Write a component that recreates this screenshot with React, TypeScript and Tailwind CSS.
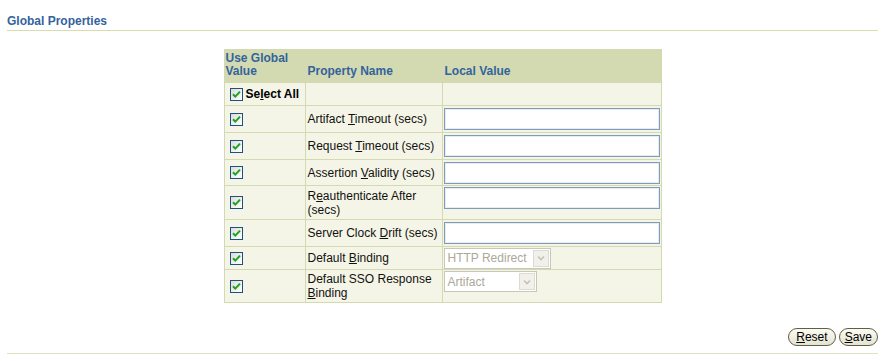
import React from "react";

const Check = () => (
  <div className="w-[13px] h-[13px] border border-[#1c5180] bg-gradient-to-br from-[#dcdcd6] to-white flex items-center justify-center shrink-0">
    <svg width="9" height="9" viewBox="0 0 9 9">
      <path d="M1 4.2 L3.3 6.6 L8 1.6" stroke="#21a121" strokeWidth="2" fill="none" />
    </svg>
  </div>
);

const U = ({ children }: { children: React.ReactNode }) => <span className="underline underline-offset-[1px]">{children}</span>;

const TextInput = () => (
  <div className="w-[216px] h-[22px] border border-[#7f9db9] bg-white shadow-[inset_0_0_0_1px_#e8ecf0]" />
);

const Select = ({ label, w }: { label: string; w: string }) => (
  <div className={`${w} h-[21px] border border-[#c9c7ba] bg-white flex items-center justify-between pl-[3px] pr-[1px]`}>
    <span className="text-[#aca899] text-[12px] leading-[14px]">{label}</span>
    <div className="w-[16px] h-[17px] border border-[#dcdbd0] bg-[#f1f0ea] flex items-center justify-center">
      <svg width="8" height="6" viewBox="0 0 8 6">
        <path d="M1 1.5 L4 4.5 L7 1.5" stroke="#c4c3b6" strokeWidth="1.6" fill="none" />
      </svg>
    </div>
  </div>
);

const rows: { h: string; label: React.ReactNode; ctrl: React.ReactNode; top?: boolean }[] = [
  { h: "h-[27px]", label: <>Artifact <U>T</U>imeout (secs)</>, ctrl: <TextInput /> },
  { h: "h-[27px]", label: <>Request <U>T</U>imeout (secs)</>, ctrl: <TextInput /> },
  { h: "h-[26px]", label: <>Assertion <U>V</U>alidity (secs)</>, ctrl: <TextInput /> },
  { h: "h-[34px]", label: <>R<U>e</U>authenticate After<br />(secs)</>, ctrl: <TextInput />, top: true },
  { h: "h-[27px]", label: <>Server Clock <U>D</U>rift (secs)</>, ctrl: <TextInput /> },
  { h: "h-[23px]", label: <>Default <U>B</U>inding</>, ctrl: <Select label="HTTP Redirect" w="w-[107px]" /> },
  { h: "h-[33px]", label: <>Default SSO Response<br /><U>B</U>inding</>, ctrl: <Select label="Artifact" w="w-[93px]" />, top: true },
];

export default function App() {
  return (
    <div className="w-[885px] h-[361px] bg-white font-['Liberation_Sans',Arial,sans-serif] text-[12px] text-black overflow-hidden">
      <div className="mx-[7px] mt-[13px] h-[18px] border-b border-[#d6dcae]">
        <span className="block text-[12px] leading-[16px] font-bold text-[#33639c]">Global Properties</span>
      </div>
      <div className="flex justify-center mt-[18px]">
        <table className="border-collapse table-fixed w-[437px]">
          <colgroup>
            <col className="w-[81px]" />
            <col className="w-[137px]" />
            <col className="w-[219px]" />
          </colgroup>
          <thead>
            <tr className="h-[33px] bg-[#d3dab2] text-[#33639c] font-bold text-left leading-[13px]">
              <th className="border border-[#d3dab2] align-bottom pl-[1px] pb-[4px] font-bold">Use Global<br />Value</th>
              <th className="border border-[#d3dab2] border-l-[#f4f5e6] align-bottom pl-[2px] pb-[4px] font-bold">Property Name</th>
              <th className="border border-[#d3dab2] border-l-[#f4f5e6] align-bottom pl-[2px] pb-[4px] font-bold">Local Value</th>
            </tr>
          </thead>
          <tbody className="bg-[#f4f5e6]">
            <tr className="h-[23px]">
              <td className="border border-[#d3dab2] pl-[5px] align-middle">
                <div className="flex items-center gap-[3px]">
                  <Check />
                  <span className="font-bold">Se<U>l</U>ect All</span>
                </div>
              </td>
              <td className="border border-[#d3dab2]" />
              <td className="border border-[#d3dab2]" />
            </tr>
            {rows.map((r, i) => (
              <tr key={i} className={r.h}>
                <td className="border border-[#d3dab2] pl-[5px] align-middle">
                  <Check />
                </td>
                <td className="border border-[#d3dab2] pl-[2px] align-middle leading-[14px] text-[#111]">{r.label}</td>
                <td className={`border border-[#d3dab2] pl-[1px] ${r.top ? "align-top pt-[1px]" : "align-middle"}`}>{r.ctrl}</td>
              </tr>
            ))}
          </tbody>
        </table>
      </div>
      <div className="flex justify-end gap-[3px] mr-[7px] mt-[25px]">
        <button className="h-[18px] px-[7px] rounded-[9px] border border-[#5f5f46] bg-gradient-to-b from-[#fbfbf3] to-[#e4e4d2] text-[12px] leading-[14px] text-black">
          <U>R</U>eset
        </button>
        <button className="h-[18px] px-[5px] rounded-[9px] border border-[#5f5f46] bg-gradient-to-b from-[#fbfbf3] to-[#e4e4d2] text-[12px] leading-[14px] text-black">
          <U>S</U>ave
        </button>
      </div>
      <div className="mx-[7px] mt-[7px] border-b border-[#dfe3c2]" />
    </div>
  );
}
